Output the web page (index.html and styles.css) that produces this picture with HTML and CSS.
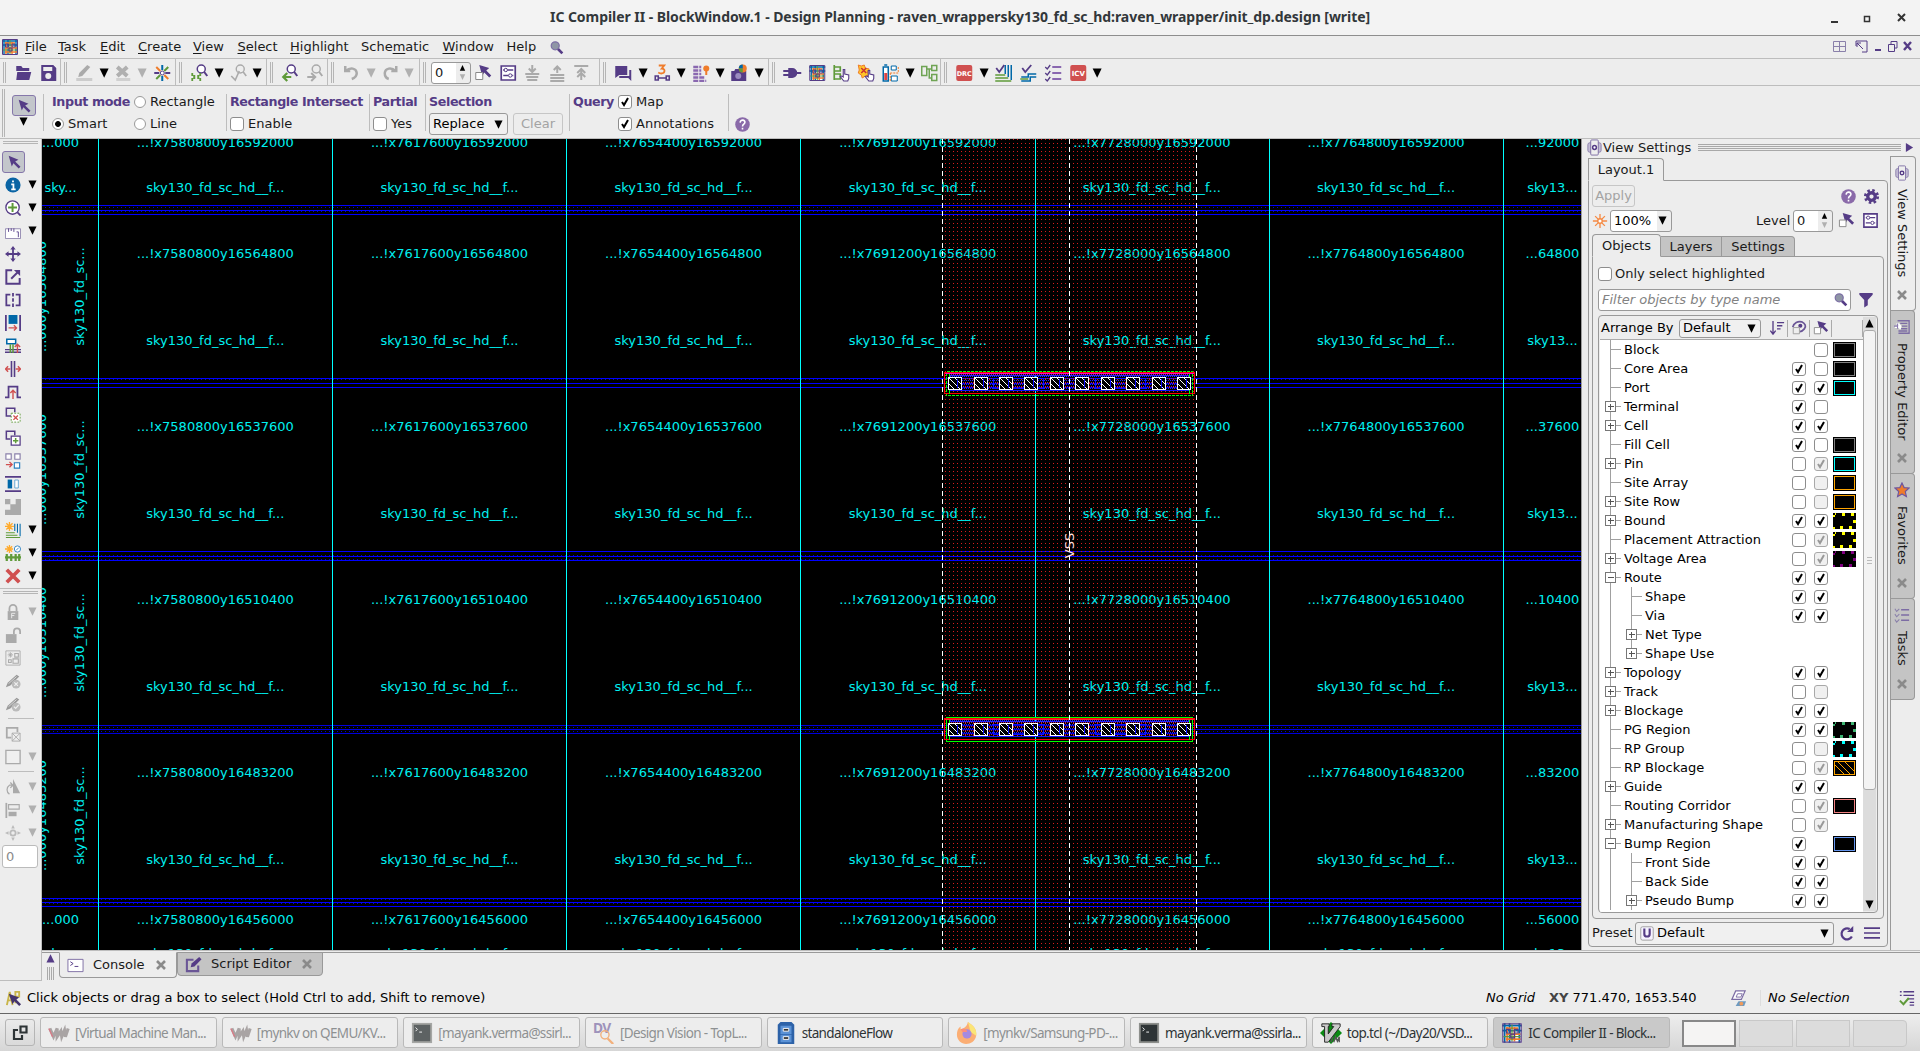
FILE: index.html
```html
<!DOCTYPE html>
<html lang="en">
<head>
<meta charset="utf-8">
<title>IC Compiler II - BlockWindow.1</title>
<link rel="stylesheet" href="styles.css">
</head>
<body>
<svg class="sprite" width="0" height="0">
  <symbol id="tri" viewBox="0 0 10 10"><path d="M.5 .5h9L5 9.800z" fill="currentColor"/></symbol>
  <symbol id="up" viewBox="0 0 10 10"><path d="M.5 9.500h9L5 .2z" fill="currentColor"/></symbol>
  <symbol id="chip" viewBox="0 0 18 18"><path fill="#fff" d="M1 1h16v16H1z"/><path d="M1 3h16M1 7h16M3 1v16M7 1v16M15 1v16" stroke="#0068a8" stroke-width="1.400"/><path d="M4 5h10M4 10h12M5 4v12M11 4v12M4 14h12" stroke="#ef7c2b" stroke-width="1.400"/><path d="M9 2v14M2 12h14" stroke="#5f9a3a"/><path d="M1.500 1.500h15v15h-15zM4.500 6h3v3h-3zM11 6h3v3h-3zM8 10h3v3H8z" fill="none" stroke="#553c86"/></symbol>
  <symbol id="search" viewBox="0 0 18 18"><path d="M9 9l6 6" stroke="#553c86" stroke-width="3"/><circle cx="7" cy="6.500" r="4.500" fill="#8f96a5" stroke="#7d70a5" stroke-width="1.400"/></symbol>
  <symbol id="folder" viewBox="0 0 18 18"><path d="M2 2h5l1.500 2H15v3H2zM3 8h14l-2 8H2z" fill="#553c86"/></symbol>
  <symbol id="save" viewBox="0 0 18 18"><path fill-rule="evenodd" d="M2 1h12l3 3v13H2zM4 3v4h9V3zM9 9a3 3 0 100 6 3 3 0 000-6z" fill="#553c86"/></symbol>
  <symbol id="pencil" viewBox="0 0 18 18"><path d="M4 9L12 1l3 2-8 9-4 1z" fill="#aaa"/><path d="M1 14h16v3H1z" fill="#ccc"/></symbol>
  <symbol id="delgray" viewBox="0 0 18 18"><path d="M3 3l10 9M13 3L3 12" stroke="#b0b0b0" stroke-width="4"/><path d="M2 14h14v3H2z" fill="#d0d0d0"/></symbol>
  <symbol id="burst" viewBox="0 0 18 18"><g stroke-width="2"><path d="M9 1v5M9 12v5" stroke="#0068a8"/><path d="M1 9h5M12 9h5" stroke="#553c86"/><path d="M3 3l4 4M11 11l4 4" stroke="#ef7c2b"/><path d="M15 3l-4 4M7 11l-4 4" stroke="#5f9a3a"/></g><circle cx="9" cy="9" r="2" fill="#fff" stroke="#553c86"/></symbol>
  <symbol id="zoomfit" viewBox="0 0 18 18"><circle cx="11" cy="5" r="4" fill="#fff" stroke="#553c86" stroke-width="1.500"/><path d="M14 8l3 4" stroke="#553c86" stroke-width="2"/><path d="M2 9v3h3M10 9v3H7M2 17v-3h3M10 17v-3H7" fill="none" stroke="#5f9a3a" stroke-width="1.800" stroke-dasharray="3 1"/></symbol>
  <symbol id="zoomgray" viewBox="0 0 18 18"><circle cx="11" cy="5" r="4" fill="none" stroke="#aaa" stroke-width="1.400"/><path d="M14 8l3 4M2 12l4 4 4-9" stroke="#aaa" stroke-width="1.600" fill="none"/></symbol>
  <symbol id="zoomback" viewBox="0 0 18 18"><circle cx="10" cy="5" r="4" fill="#fff" stroke="#553c86" stroke-width="1.500"/><path d="M13 8l3 4" stroke="#553c86" stroke-width="2"/><path d="M10 13H3M6 9l-4 4 4 4" fill="none" stroke="#5f9a3a" stroke-width="2.200"/></symbol>
  <symbol id="zoomnext" viewBox="0 0 18 18"><circle cx="10" cy="5" r="4" fill="none" stroke="#aaa" stroke-width="1.500"/><path d="M13 8l3 4M1 13h7M5 9l4 4-4 4" fill="none" stroke="#aaa" stroke-width="2"/></symbol>
  <symbol id="undo" viewBox="0 0 18 18"><path d="M3 2v5h5M3.500 7C8 3 14 4 14.500 9c0 3-2 5-5 6" fill="none" stroke="#aaa" stroke-width="2.500"/></symbol>
  <symbol id="redo" viewBox="0 0 18 18"><path d="M15 2v5h-5M14.500 7C10 3 4 4 3.500 9c0 3 1 5 4 6" fill="none" stroke="#aaa" stroke-width="2.500"/></symbol>
  <symbol id="pick" viewBox="0 0 18 18"><path d="M5 1l10 3-3 2.500 5 5-2 2-5-5L8 12z" fill="#553c86"/><path d="M1.500 8.500h7v7h-7z" fill="#fff" stroke="#888"/></symbol>
  <symbol id="prefs" viewBox="0 0 18 18"><path d="M2 2h14v14H2z" fill="#fff" stroke="#553c86" stroke-width="1.700"/><circle cx="6.500" cy="6" r="1.700" fill="none" stroke="#553c86"/><circle cx="11" cy="11.500" r="1.700" fill="none" stroke="#553c86"/><path d="M8.500 6H14M4 11.500h5M4 6h1M13 11.500h1" stroke="#553c86" stroke-width="1.300"/></symbol>
  <symbol id="down-l" viewBox="0 0 18 18"><path d="M9 1v6M5.500 4.500L9 8l3.500-3.500M2 10h14M3 13h12M4 16h10" stroke="#aaa" stroke-width="2" fill="none"/></symbol>
  <symbol id="up-l" viewBox="0 0 18 18"><path d="M9 9V3M5.500 6L9 2.500 12.500 6M2 11h14M2 14h14M2 17h14" stroke="#aaa" stroke-width="2" fill="none"/></symbol>
  <symbol id="top-l" viewBox="0 0 18 18"><path d="M2 2h14M9 16V5M5 9l4-4 4 4M5 13l4-4 4 4" stroke="#aaa" stroke-width="2" fill="none"/></symbol>
  <symbol id="chat" viewBox="0 0 18 18"><path d="M1 2h12v9H5l-4 3z" fill="#553c86"/><path d="M15 6h2v11l-3-3H5v-2h10z" fill="#553c86"/></symbol>
  <symbol id="three" viewBox="0 0 18 18"><path d="M5.500 1.500H11L8.500 4.500c4 0 3.500 5-.5 5-1 0-2-.4-3-1" fill="none" stroke="#ef7c2b" stroke-width="1.800"/><path d="M2 12h3v4H2zM13 12h3v4h-3zM5 14h8" fill="none" stroke="#553c86" stroke-width="1.600"/></symbol>
  <symbol id="bricks" viewBox="0 0 18 18"><path d="M1 3h8M1 6.500h8M1 10h8M1 13.500h12M1 17h13" stroke="#8a68b0" stroke-width="2.600" stroke-dasharray="5 1"/><circle cx="14" cy="4.500" r="3" fill="#ef7c2b"/><path d="M14 6v5" stroke="#ef7c2b" stroke-width="2"/></symbol>
  <symbol id="camera" viewBox="0 0 18 18"><path d="M1 7h3l1-2h6l1 2h4v10H1z" fill="#553c86"/><circle cx="8" cy="12" r="3" fill="#9c8cc0"/><circle cx="12.500" cy="4.500" r="4" fill="#ef7c2b"/><path d="M12.500 4.500v-4a4 4 0 00-4 4z" fill="#0068a8"/><path d="M12.500 4.500h-4a4 4 0 004 4z" fill="#5f9a3a"/></symbol>
  <symbol id="plug" viewBox="0 0 18 18"><path d="M5 4h4a5 5 0 010 10H5zM0 6h5v2H0zM0 10h5v2H0zM12 8h6v2h-6z" fill="#553c86"/></symbol>
  <symbol id="tree-h" viewBox="0 0 18 18"><path d="M2 1v15M2 3h6v4H2M2 10h6v5H2" stroke="#5f9a3a" stroke-width="1.700" fill="none"/><path d="M11.500 17L8 12.500l1.500-.5 1.500 1V5.500h1.500V10l4 1v3.500L15.500 17z" fill="#fff" stroke="#553c86" stroke-width="1.100"/></symbol>
  <symbol id="burst-h" viewBox="0 0 18 18"><path d="M1 1l3 1 3-1 1 3 4 1-2 3 2 3-4 1-3 2-1-3-3-2 1-3z" fill="#ffc629" stroke="#ef7c2b"/><path d="M4 4l5 5M9 4L4 9" stroke="#c33" stroke-width="1.500"/><path d="M11.500 17L8 12.500l1.500-.5 1.500 1V6.500h1.500V10l4 1v3.500L15.500 17z" fill="#fff" stroke="#553c86" stroke-width="1.100"/></symbol>
  <symbol id="battery" viewBox="0 0 18 18"><path d="M2 3h5v14H2zM3 1h3" fill="#fff" stroke="#0068a8" stroke-width="1.500"/><path d="M3 9h3v7H3z" fill="#d44"/><path d="M10 2h5v4h-5zM10 12h6v5h-6z" fill="#fff" stroke="#0068a8"/><path d="M9 9h8V2M9 9v8" stroke="#ef7c2b" fill="none" stroke-dasharray="2 1"/></symbol>
  <symbol id="hier" viewBox="0 0 18 18"><path d="M1.500 2.500h5v9h-5zM11.500 1.500h5v5h-5zM11.500 10.500h5v6h-5zM6 5h5M9 5v9h2" fill="none" stroke="#6fa454" stroke-width="1.500"/></symbol>
  <symbol id="drc" viewBox="0 0 18 18"><rect x="1" y="1" width="16" height="16" rx="2" fill="#d05050"/><text x="9" y="12" text-anchor="middle" font-size="6.500" font-weight="bold" fill="#fff">DRC</text></symbol>
  <symbol id="icv" viewBox="0 0 18 18"><rect x="1" y="1" width="16" height="16" rx="2" fill="#d05050"/><text x="9" y="12" text-anchor="middle" font-size="7" font-weight="bold" fill="#fff">ICV</text></symbol>
  <symbol id="chk-a" viewBox="0 0 18 18"><path d="M11 1v9M14 1v12M17 1v15" stroke="#0068a8" stroke-width="1.500"/><path d="M1 11h10M1 14h13M1 17h16" stroke="#5f9a3a" stroke-width="1.500"/><path d="M2 4l3 4 5-7" stroke="#553c86" stroke-width="1.800" fill="none"/></symbol>
  <symbol id="chk-b" viewBox="0 0 18 18"><path d="M17 10H9v3H2M17 13h-6v4H2" stroke="#0068a8" stroke-width="1.500" fill="none"/><path d="M1 15h8" stroke="#5f9a3a" stroke-width="1.300"/><path d="M3 4l3 4 6-7" stroke="#553c86" stroke-width="1.800" fill="none"/></symbol>
  <symbol id="chk-c" viewBox="0 0 18 18"><path d="M8 3h9M8 9h9M8 15h9" stroke="#8a68b0" stroke-width="1.800"/><path d="M1 3l2 2 3-4M1 9l2 2 3-4M1 15l2 2 3-4" stroke="#553c86" fill="none" stroke-width="1.300"/></symbol>
  <symbol id="arrow" viewBox="0 0 18 18"><path d="M3 2l11 4.500-3.700 1.800 6 6-2 2-6-6L6.500 14z" fill="#553c86"/></symbol>
  <symbol id="help" viewBox="0 0 18 18"><circle cx="9" cy="9" r="7.700" fill="#8a6aa9"/><path d="M6.500 7c.3-4 5.600-3 5 0-.4 1.700-2.500 1.600-2.500 4M9 12.500v1.800" fill="none" stroke="#fff" stroke-width="1.700"/></symbol>
  <symbol id="gear" viewBox="0 0 18 18"><circle cx="9" cy="9" r="4" fill="none" stroke="#553c86" stroke-width="3.500"/><circle cx="9" cy="9" r="6.500" fill="none" stroke="#553c86" stroke-width="3" stroke-dasharray="2.600 2.500"/></symbol>
  <symbol id="info" viewBox="0 0 18 18"><circle cx="9" cy="9" r="8.500" fill="#0a64a4"/><path d="M9 4v2M7 8.200h2.500V14M7 14h5" stroke="#fff" stroke-width="2" fill="none"/></symbol>
  <symbol id="zoomin" viewBox="0 0 18 18"><circle cx="8.500" cy="8.500" r="7.500" fill="#fff" stroke="#553c86" stroke-width="1.500"/><path d="M14 14l3.500 3.500" stroke="#553c86" stroke-width="2"/><path d="M8.500 3.500v10M3.500 8.500h10" stroke="#5f9a3a" stroke-width="2.200"/></symbol>
  <symbol id="ruler" viewBox="0 0 18 18"><path d="M.500 6.500h17v11H.500z" fill="#fff" stroke="#8a80aa"/><path d="M4 6v4M7 6v3M10 6v4M13 10h2v6" stroke="#553c86" fill="none"/></symbol>
  <symbol id="move" viewBox="0 0 18 18"><path d="M9 2v14M2 9h14" stroke="#553c86" stroke-width="2"/><path d="M9 0l3 4H6zM9 18l3-4H6zM0 9l4-3v6zM18 9l-4-3v6z" fill="#553c86"/></symbol>
  <symbol id="resize" viewBox="0 0 18 18"><path d="M8 1.500H1.500v15h15V10" fill="none" stroke="#553c86" stroke-width="2.200"/><path d="M7 11l7-7" stroke="#553c86" stroke-width="2.200"/><path d="M10 1h7v7z" fill="#553c86"/></symbol>
  <symbol id="flip" viewBox="0 0 18 18"><path d="M6 3H1.500v12H6M12 3h4.500v12H12" fill="none" stroke="#553c86" stroke-width="2"/><path d="M9 1v16" stroke="#553c86" stroke-width="2" stroke-dasharray="4 2"/></symbol>
  <symbol id="side" viewBox="0 0 18 18"><path d="M1 0v18M17 0v18" stroke="#553c86" stroke-width="2"/><path d="M4 0h10v10H4z" fill="#0068a8"/><path d="M4 14.500h9M10 11.500l3 3-3 3" stroke="#d05050" stroke-width="1.500" fill="none"/></symbol>
  <symbol id="stack" viewBox="0 0 18 18"><path d="M2 1.500h10v5H2z" fill="#fff" stroke="#0068a8" stroke-width="1.700"/><path d="M0 13h18M0 16h18" stroke="#553c86" stroke-width="1.500"/><path d="M6 7v10M9 7v10" stroke="#5f9a3a" stroke-width="1.700"/><path d="M14 17V8M11 10l3-3 3 3" stroke="#d05050" stroke-width="1.600" fill="none"/></symbol>
  <symbol id="spread" viewBox="0 0 18 18"><path d="M7.300 0v18M10.700 0v18" stroke="#553c86" stroke-width="1.800"/><path d="M6 9H1M3.500 6l-3 3 3 3M12 9h5M14.500 6l3 3-3 3" stroke="#d05050" stroke-width="1.700" fill="none"/></symbol>
  <symbol id="pulse" viewBox="0 0 18 18"><path d="M0 15h4V3h10v12h4" stroke="#553c86" stroke-width="2" fill="none"/><path d="M9 17V8M6 10l3-3 3 3" stroke="#d05050" stroke-width="1.600" fill="none"/></symbol>
  <symbol id="copy-x" viewBox="0 0 18 18"><path d="M7 10H1.500V1.500H11V6" stroke="#553c86" stroke-width="1.700" fill="none"/><path d="M7 7h10v10H7z" fill="#fff" stroke="#5f9a3a" stroke-dasharray="2 1.500"/><path d="M9.500 9.500l5 5M14.500 9.500l-5 5" stroke="#d05050" stroke-width="1.500"/></symbol>
  <symbol id="copy-p" viewBox="0 0 18 18"><path d="M6 10H1.500V1.500H11V6" stroke="#553c86" stroke-width="1.700" fill="none"/><path d="M7 7h10v10H7z" fill="#fff" stroke="#553c86" stroke-width="1.400"/><path d="M12 9v6M9 12h6" stroke="#5f9a3a" stroke-width="1.700"/></symbol>
  <symbol id="quad" viewBox="0 0 18 18"><path d="M1 1h6v6H1zM11 1h6v6h-6z" fill="#fff" stroke="#8a80aa" stroke-width="1.300"/><path d="M10.500 11h6v6h-6z" fill="#fff" stroke="#2a80c0" stroke-width="1.300"/><path d="M1 13h7M5 10l3 3-3 3" stroke="#d05050" stroke-width="1.500" fill="none"/></symbol>
  <symbol id="fitv" viewBox="0 0 18 18"><path d="M0 1h18M0 17h18" stroke="#553c86" stroke-width="2"/><path d="M3 4h5v10H3z" fill="#0068a8"/><path d="M11 4.500h4v9h-4z" fill="#fff" stroke="#5aa0d0"/></symbol>
  <symbol id="checker" viewBox="0 0 18 18"><path d="M0 0h6v6H0zM12 0h6v6h-6zM6 6h6v6H6zM0 12h18v6H0zM12 5h6v8h-6z" fill="#aaa"/></symbol>
  <symbol id="newlayer" viewBox="0 0 18 18"><path d="M11 2v8M14 2v10M17 2v14" stroke="#0068a8" stroke-width="1.200"/><path d="M1 12h10M1 15h13M1 17.500h16" stroke="#5f9a3a" stroke-width="1.200"/><path d="M5 0v10M0 5h10M1.500 1.500l7 7M8.500 1.500l-7 7" stroke="#ffab2e" stroke-width="1.500"/></symbol>
  <symbol id="newfence" viewBox="0 0 18 18"><path d="M0 14h18M2 10v8M7 10v8M12 10v8M16 10v8" stroke="#5f9a3a" stroke-width="2.500"/><path d="M5 0v9M0 4.500h9M2 1.500l6 6M8 1.500l-6 6" stroke="#ffab2e" stroke-width="1.500"/><circle cx="14" cy="4.500" r="3.500" fill="#fff" stroke="#2a80c0"/><path d="M12.500 6l3-3" stroke="#2a80c0"/></symbol>
  <symbol id="redx" viewBox="0 0 18 18"><path d="M2 2l14 14M16 2L2 16" stroke="#d05050" stroke-width="4.200"/></symbol>
  <symbol id="lock" viewBox="0 0 18 18"><path d="M5 8V5a4 4 0 018 0v3" fill="none" stroke="#aaa" stroke-width="2"/><path d="M3 8h12v10H3z" fill="#aaa"/><path d="M7.500 16v-5.500h4M7.500 13h3" stroke="#eee" fill="none"/></symbol>
  <symbol id="unlock" viewBox="0 0 18 18"><path d="M10 8V5a3.500 3.500 0 017 0v3" fill="none" stroke="#aaa" stroke-width="2"/><path d="M1 8h12v10H1z" fill="#aaa"/></symbol>
  <symbol id="blocks" viewBox="0 0 18 18"><path d="M1 1h16v16H1z" fill="none" stroke="#aaa"/><path d="M3 5.500h6M6 2.500v6M4 3.500l4 4M8 3.500l-4 4" stroke="#aaa"/><path d="M11 4h4v4h-4zM4 11h3v3H4zM9 10h6v5H9z" fill="none" stroke="#aaa" stroke-width="1.200"/></symbol>
  <symbol id="pen-x" viewBox="0 0 18 18"><path d="M1 16l2-5L13 2l3 2L6 14z" fill="#999"/><path d="M4 12l9-8" stroke="#ddd"/><circle cx="12.500" cy="12.500" r="5" fill="#bbb"/><path d="M10.500 10.500l4 4M14.500 10.500l-4 4" stroke="#eee" stroke-width="1.400"/></symbol>
  <symbol id="pen-c" viewBox="0 0 18 18"><path d="M1 16l2-5L13 2l3 2L6 14z" fill="#999"/><path d="M4 12l9-8" stroke="#ddd"/><circle cx="12.500" cy="12.500" r="5" fill="#bbb"/><path d="M10 12l2 2 3.500-4" stroke="#eee" stroke-width="1.400" fill="none"/></symbol>
  <symbol id="sq-x" viewBox="0 0 18 18"><path d="M7 13H2V2h12v5" fill="none" stroke="#aaa" stroke-width="2"/><path d="M8 8h9v9H8zM8 8l9 9M17 8l-9 9" fill="none" stroke="#aaa"/></symbol>
  <symbol id="sq" viewBox="0 0 18 18"><path d="M1 1.500h16v15H1z" fill="#efefef" stroke="#aaa" stroke-width="1.500"/></symbol>
  <symbol id="mirror" viewBox="0 0 18 18"><path d="M9 0l8 16H9z" fill="#aaa"/><path d="M5 17a6 6 0 010-10h3M6 4l3 3-3 3" stroke="#aaa" fill="none" stroke-width="1.400"/></symbol>
  <symbol id="align" viewBox="0 0 18 18"><path d="M1.500 1v17" stroke="#aaa" stroke-width="2"/><path d="M4 3h12v5H4z" fill="none" stroke="#aaa" stroke-width="1.300"/><path d="M4 11h9v5H4z" fill="#aaa"/></symbol>
  <symbol id="center" viewBox="0 0 18 18"><circle cx="9" cy="9" r="3" fill="none" stroke="#bbb" stroke-width="2"/><path d="M9 0l2 4H7zM9 18l2-4H7zM0 9l4-2v4zM18 9l-4-2v4z" fill="#bbb"/></symbol>
  <symbol id="chipview" viewBox="0 0 18 18"><rect x="2" y="4" width="14" height="10" rx="2" fill="#c4bdd6" stroke="#8a80aa"/><rect x="5" y="1" width="8" height="16" rx="1" fill="#eee" stroke="#7c6ca4"/><circle cx="9" cy="9" r="2" fill="#fff" stroke="#553c86" stroke-width="1.600"/></symbol>
  <symbol id="sun" viewBox="0 0 18 18"><path d="M9 1v16M1 9h16M3.500 3.500l11 11M14.500 3.500l-11 11" stroke="#f58b45" stroke-width="1.500"/><circle cx="9" cy="9" r="2.500" fill="#fff" stroke="#f58b45" stroke-width="1.500"/></symbol>
  <symbol id="funnel" viewBox="0 0 18 18"><path d="M1.500 1h15v2L11 9v6l-4 2.500V9L1.500 3z" fill="#553c86"/></symbol>
  <symbol id="sort" viewBox="0 0 18 18"><path d="M4.500 1v14M1.500 12l3 4 3-4M9 3h8M9 6.500h6M9 10h4" stroke="#553c86" stroke-width="1.500" fill="none"/></symbol>
  <symbol id="eye" viewBox="0 0 18 18"><path d="M2 8C3 3 8 1 12 2c4 2 5.500 5 3 8s-4 3-5 3" fill="none" stroke="#6a5696" stroke-width="2"/><circle cx="10.500" cy="6.500" r="2.300" fill="#553c86"/><path d="M2.500 8.500h7v7h-7z" fill="#eee" stroke="#999"/></symbol>
  <symbol id="preset" viewBox="0 0 18 18"><rect x="2" y="2" width="14" height="15" rx="2" fill="#f6f3ff" stroke="#999"/><path d="M6 4v6c0 4 6 4 6 0V4" fill="none" stroke="#553c86" stroke-width="2.400"/></symbol>
  <symbol id="reload" viewBox="0 0 18 18"><path d="M14.500 13A6.200 6.200 0 1112 4.500" fill="none" stroke="#553c86" stroke-width="2.500"/><path d="M9 8h7V1z" fill="#553c86"/></symbol>
  <symbol id="menu" viewBox="0 0 18 18"><path d="M0 3.500h18M0 9h18M0 14.500h18" stroke="#553c86" stroke-width="1.900"/></symbol>
  <symbol id="close" viewBox="0 0 10 10"><path d="M1 1l8 8M9 1L1 9" stroke="#8a8a8a" stroke-width="2.600"/></symbol>
  <symbol id="props" viewBox="0 0 18 18"><path d="M4 2h13v14H5M7 5h8M9 8h6M8 11h7M5 13.500h10" fill="none" stroke="#7c6ca4" stroke-width="1.500"/><path d="M1 9h5M3 6a3 3 0 013 5" stroke="#fff" stroke-width="2.500" fill="none"/><path d="M0 8h4M4 5v6" stroke="#8a7ab0" stroke-width="1.200" fill="none"/></symbol>
  <symbol id="star" viewBox="0 0 18 18"><path d="M9 1l2.400 5.300 5.600.5-4.300 3.900 1.300 5.800L9 13.500l-5 3 1.300-5.800L1 6.800l5.600-.5z" fill="#ef7c2b" stroke="#6d56a0" stroke-width="1.300"/></symbol>
  <symbol id="tasks" viewBox="0 0 18 18"><path d="M8 3h9M8 9h9M8 15h9" stroke="#7c6ca4" stroke-width="1.700"/><path d="M1 2l2 3 3-3M1 8l2 3 3-3M1 14l2 3 3-3" stroke="#8a80aa" fill="none" stroke-width="1.200"/></symbol>
  <symbol id="console" viewBox="0 0 18 18"><path d="M1 2.500h16v13H1z" fill="#fff" stroke="#7c6ca4"/><path d="M3.500 5l3 2-3 2M8 10h4" stroke="#553c86" fill="none"/></symbol>
  <symbol id="edit" viewBox="0 0 18 18"><path d="M9 4H2v12h12v-6" fill="none" stroke="#6a5696" stroke-width="2.200"/><path d="M6 12l1-4 8-7 2.500 2.500L10 11z" fill="#553c86"/></symbol>
  <symbol id="hint" viewBox="0 0 18 18"><path d="M2 16L5 2l3 14M3 11h4M11 1v13M11 2h4v5h-4" fill="none" stroke="#c9b54a" stroke-width="2"/><path d="M4 4l11 4-3 2 5 5-2 2-5-5-2 3z" fill="#44346c"/></symbol>
  <symbol id="grid3d" viewBox="0 0 18 18"><path d="M6 1h10l-4 9H2z" fill="#fff" stroke="#7c6ca4" stroke-width="1.300"/><path d="M8 4h5l-1.500 3.500H6.500z" fill="none" stroke="#7c6ca4"/><path d="M9 12h8l-2 5H6z" fill="#6d9ac0"/><circle cx="12" cy="14.500" r="2" fill="#ef9a5b"/></symbol>
  <symbol id="checklist" viewBox="0 0 18 18"><path d="M1 2h2M5 2h12M1 6h2M5 6h12M10 10h7M12 14h5M12 17h5" stroke="#553c86" stroke-width="1.500"/><path d="M1 12l4 4 6-7" stroke="#5f9a3a" stroke-width="2.200" fill="none"/></symbol>
  <symbol id="vmm" viewBox="0 0 24 24"><path d="M2 7l4 9 4-9v9l4-6 1 6 3-7 1 7 3-9" fill="none" stroke="#a9a4a4" stroke-width="3.400"/><path d="M1 7l4 9" stroke="#d97a86" stroke-width="1.500"/></symbol>
  <symbol id="term" viewBox="0 0 24 24"><path d="M1 1h22v22H1z" fill="#8d8f8c"/><path d="M3 3h18v18H3z" fill="#2e3436"/><path d="M5 6l2 2-2 2M9 11h3" stroke="#fff" fill="none"/></symbol>
  <symbol id="dv" viewBox="0 0 24 24"><text x="0" y="12" font-size="15" font-weight="bold" fill="#9d92bb">DV</text><circle cx="13" cy="14" r="4.500" fill="none" stroke="#f2b07c" stroke-width="1.500"/><path d="M16 18l6 6" stroke="#f2b07c" stroke-width="2.500"/></symbol>
  <symbol id="cabinet" viewBox="0 0 24 24"><path d="M3 3l3-3h12l3 3v21H3z" fill="#2d62a8"/><path d="M6 4h12v9H6zM6 14h12v8H6z" fill="#5b92d6"/><path d="M9 7h6v3H9zM9 16h6v3H9z" fill="#333" stroke="#fff"/></symbol>
  <symbol id="fox" viewBox="0 0 24 24"><path d="M13 0c6 4 10 8 9 15-1 6-6 9-11 9S1 20 1 14c0-4 1-7 4-9v3c4-1 7-3 8-8z" fill="#fbae74"/><path d="M13 0c6 4 10 8 9 15l-6-4z" fill="#fbe577"/><circle cx="12" cy="13" r="5" fill="#a58ae0"/><path d="M5 8c3-2 7-1 7 3H7z" fill="#fb8f7d"/></symbol>
  <symbol id="vim" viewBox="0 0 24 24"><path d="M12 0l12 12-12 12L0 12z" fill="#0a8a12"/><path d="M2 2h8v3H9v8l6-8h-2V2h9v3L9 22H5V5H2z" fill="#c9c9c9" stroke="#222"/><path d="M12 22l2-6M15 22l2-6 2 5 2-5v6" stroke="#555" fill="none" stroke-width="1.500"/></symbol>
</svg>

<header class="titlebar">
  <h1>IC Compiler II - BlockWindow.1 - Design Planning - raven_wrappersky130_fd_sc_hd:raven_wrapper/init_dp.design [write]</h1>
  <svg class="winctl" viewBox="0 0 90 20"><path d="M6 14h7" stroke="#333" stroke-width="2"/><path d="M39.500 8.500h5v5h-5z" fill="none" stroke="#333" stroke-width="1.500"/><path d="M73 6l7 7M80 6l-7 7" stroke="#333" stroke-width="2"/></svg>
</header>

<nav class="menubar">
  <svg class="i20"><use href="#chip"/></svg>
  <ul>
    <li><u>F</u>ile</li><li><u>T</u>ask</li><li><u>E</u>dit</li><li><u>C</u>reate</li><li><u>V</u>iew</li><li><u>S</u>elect</li><li><u>H</u>ighlight</li><li>Sche<u>m</u>atic</li><li><u>W</u>indow</li><li>Help</li>
  </ul>
  <svg class="i16"><use href="#search"/></svg>
  <svg class="mdi" viewBox="0 0 84 18"><g fill="none" stroke="#553c86"><path d="M3.500 3.500h12v10h-12zM9.500 3v10M4 8.500h12" stroke="#8a80aa"/><path d="M32 14h5V3H26v5M33 11l-6-6M27 9V5h4"/><path d="M45 12h6" stroke-width="2"/><path d="M58.500 6.500h6v7h-6zM61 6V3.500h6V10h-3"/><path d="M74 4l7 8M81 4l-7 8" stroke-width="2.400"/></g></svg>
</nav>

<div class="toolbar" id="toolbar"></div>

<div class="modebar">
  <i class="grip"></i>
  <div class="modebtn"><span class="pressed"><svg class="i16"><use href="#arrow"/></svg></span><svg class="t"><use href="#tri"/></svg></div>
  <section class="s-mode"><div><b>Input mode</b><i class="radio"></i>Rectangle</div><div><i class="radio on"></i><span class="smart">Smart</span><i class="radio"></i>Line</div></section>
  <section class="s-rect"><div><b>Rectangle Intersect</b></div><div><i class="cb"></i>Enable</div></section>
  <section class="s-part"><div><b>Partial</b></div><div><i class="cb"></i>Yes</div></section>
  <section class="s-sel"><div><b>Selection</b></div><div><span class="combo">Replace<svg class="t"><use href="#tri"/></svg></span><span class="btn">Clear</span></div></section>
  <section class="s-query"><div><b>Query</b><i class="cb on"></i>Map</div><div><b></b><i class="cb on"></i>Annotations</div></section>
  <section class="s-help"><div></div><div><svg class="i18"><use href="#help"/></svg></div></section>
</div>

<main>
  <aside class="tools" id="tools"></aside>
  <div class="work">
    <div class="upper">
      <svg class="layout" id="layout" viewBox="42 139 1539 811"></svg>
      <div class="dock">
        <div class="dockhead"><svg class="i18"><use href="#chipview"/></svg><span>View Settings</span><i class="lines"></i><svg class="play" viewBox="0 0 10 10"><path d="M1 0l8 5-8 5z" fill="#553c86"/></svg></div>
        <div class="dockbody">
          <div class="settings">
            <div class="tabs outer"><span class="tab on">Layout.1</span></div>
            <div class="pane">
              <div class="line1"><span class="btn">Apply</span><svg class="i18"><use href="#help"/></svg><svg class="i18"><use href="#gear"/></svg></div>
              <div class="line2"><svg class="i16"><use href="#sun"/></svg><span class="combo">100%<svg class="t"><use href="#tri"/></svg></span><label>Level</label><span class="spin">0<em><svg><use href="#up"/></svg><svg class="dim"><use href="#tri"/></svg></em></span><svg class="i18"><use href="#pick"/></svg><svg class="i18"><use href="#prefs"/></svg></div>
              <div class="tabs inner"><span class="tab on">Objects</span><span class="tab">Layers</span><span class="tab">Settings</span></div>
              <div class="pane2">
                <div class="only"><i class="cb"></i>Only select highlighted</div>
                <div class="filter"><span class="field">Filter objects by type name<svg class="i16"><use href="#search"/></svg></span><svg class="i16"><use href="#funnel"/></svg></div>
                <div class="treebox">
                  <div class="treecol">
                    <div class="treehead"><span class="arr">Arrange By</span><span class="combo">Default<svg class="t"><use href="#tri"/></svg></span><span class="hc"><svg class="i16"><use href="#sort"/></svg></span><span class="hc"><svg class="i16"><use href="#eye"/></svg></span><span class="hc"><svg class="i16"><use href="#pick"/></svg></span><span class="hc"></span></div>
                    <div class="tree" id="tree"></div>
                  </div>
                  <div class="scroll"><svg class="t"><use href="#up"/></svg><div class="thumb"><i></i></div><div class="trough"></div><svg class="t"><use href="#tri"/></svg></div>
                </div>
              </div>
              <div class="preset"><span>Preset</span><span class="combo"><svg class="i16"><use href="#preset"/></svg>Default<svg class="t"><use href="#tri"/></svg></span><svg class="i16"><use href="#reload"/></svg><svg class="i16"><use href="#menu"/></svg></div>
            </div>
          </div>
          <div class="vtabs">
            <div class="vtab v1 on"><svg class="i16"><use href="#chipview"/></svg><span>View Settings</span><svg class="x"><use href="#close"/></svg></div>
            <div class="vtab v2"><svg class="i16"><use href="#props"/></svg><span>Property Editor</span><svg class="x"><use href="#close"/></svg></div>
            <div class="vtab v3"><svg class="i16"><use href="#star"/></svg><span>Favorites</span><svg class="x"><use href="#close"/></svg></div>
            <div class="vtab v4"><svg class="i16"><use href="#tasks"/></svg><span>Tasks</span><svg class="x"><use href="#close"/></svg></div>
          </div>
        </div>
      </div>
    </div>
    <div class="lower">
      <div class="expander"><svg class="t"><use href="#up"/></svg><i></i></div>
      <div class="btab on"><svg class="i18"><use href="#console"/></svg><span>Console</span><svg class="x"><use href="#close"/></svg></div>
      <div class="btab"><svg class="i18"><use href="#edit"/></svg><span>Script Editor</span><svg class="x"><use href="#close"/></svg></div>
    </div>
  </div>
</main>

<footer class="status">
  <svg class="i18"><use href="#hint"/></svg><span>Click objects or drag a box to select (Hold Ctrl to add, Shift to remove)</span>
  <span class="grid"><em>No Grid</em></span><span class="xy"><b>XY</b> 771.470, 1653.540</span>
  <svg class="i18"><use href="#grid3d"/></svg><span class="nosel"><em>No Selection</em></span><svg class="i16"><use href="#checklist"/></svg>
</footer>

<div class="taskbar">
  <span class="show"><svg viewBox="0 0 18 18"><path d="M9.500 2.500h6v6h-6zM7 6H3v9h8v-4" fill="none" stroke="#2e3436" stroke-width="2.200"/></svg></span>
  <div class="tasks">
    <span class="task min"><svg><use href="#vmm"/></svg>[Virtual Machine Man...</span>
    <span class="task min"><svg><use href="#vmm"/></svg>[mynkv on QEMU/KV...</span>
    <span class="task min"><svg class="fade"><use href="#term"/></svg>[mayank.verma@ssirl...</span>
    <span class="task min"><svg><use href="#dv"/></svg>[Design Vision - TopL...</span>
    <span class="task"><svg><use href="#cabinet"/></svg>standaloneFlow</span>
    <span class="task min"><svg><use href="#fox"/></svg>[mynkv/Samsung-PD-...</span>
    <span class="task"><svg><use href="#term"/></svg>mayank.verma@ssirla...</span>
    <span class="task"><svg><use href="#vim"/></svg>top.tcl (~/Day20/VSD...</span>
    <span class="task active"><svg><use href="#chip"/></svg>IC Compiler II - Block...</span>
  </div>
  <div class="pager"><i class="on"></i><i></i><i></i><i></i></div>
</div>
<script src="app.js"></script>
</body>
</html>
```

FILE: styles.css
```css
* { box-sizing: border-box; }
body {
  margin: 0; width: 1920px; height: 1051px; overflow: hidden;
  display: flex; flex-direction: column;
  background: #ededed; color: #1a1a1a;
  font: 13px/16px "DejaVu Sans", sans-serif;
}
.sprite { position: absolute; }
svg { display: block; flex: none; }
.i16 { width: 16px; height: 16px; }
.i18 { width: 17px; height: 17px; }
.i20 { width: 18px; height: 18px; }
.t { width: 9px; height: 9px; color: #000; }
.x { width: 10px; height: 10px; }

.titlebar { height: 36px; background: #f3f3f3; border-bottom: 1px solid #8e8e8e; display: flex; align-items: center; position: relative; justify-content: center; }
.titlebar h1 { margin: 0 0 2px; font: bold 14px/20px "Noto Sans", sans-serif; letter-spacing: -.055px; color: #32373a; white-space: nowrap; width: 820px; }
.winctl { position: absolute; right: 5px; top: 8px; width: 90px; height: 20px; }

.menubar { height: 23px; border-bottom: 1px solid #bdbdbd; display: flex; align-items: center; padding-left: 1px; }
.menubar ul { display: grid; grid-template-columns: 33px 42px 38px 55px 44.500px 52.500px 71px 81.500px 64px 42px; list-style: none; margin: 0 0 0 6px; padding: 0; }
.menubar ul + .i16 { margin-top: 1px; }
.menubar u { text-underline-offset: 2px; }
.mdi { width: 84px; height: 18px; margin-left: 1265px; }

.toolbar { height: 27px; border-bottom: 1px solid #bdbdbd; display: flex; }
.group { display: flex; align-items: center; border-left: 1px solid #bdbdbd; padding-left: 3px; height: 27px; }
.group:first-child { border-left: 0; padding-left: 3px; }
.grip { width: 3px; height: 21px; border: solid #b5b5b5; border-width: 0 1px; margin-right: 5px; flex: none; }
.ico { width: 24.500px; height: 18px; flex: none; }
.caret { width: 14.300px; height: 10px; flex: none; color: #000; }
.dim { color: #b0b0b0; }
.g1 { width: 60px; } .g2 { width: 115px; } .g3 { width: 91px; } .g4 { width: 61px; }
.g5 { width: 92px; } .g6 { width: 180px; } .g7 { width: 169px; } .g8 { width: 172px; }
.g9 .ico + .ico { margin-left: .5px; }

.spin, .combo, .field { border: 1px solid #999; border-radius: 3px; background: #fff; display: flex; align-items: center; }
.spin { width: 40px; height: 22px; padding-left: 3px; background: linear-gradient(90deg, #fff 24px, #ededed 24px); justify-content: space-between; }
.spin em { display: grid; gap: 3px; padding-right: 4px; color: #000; }
.spin em svg { width: 7px; height: 6px; }
.combo { background: #f0f0f0; justify-content: space-between; padding: 0 4px 0 3px; height: 22px; color: #000; }
.btn { border: 1px solid #c6c6c6; border-radius: 3px; color: #a3a3a3; display: flex; align-items: center; justify-content: center; height: 22px; }
.cb { width: 14px; height: 14px; border: 1px solid #8d8d8d; border-radius: 3px; background: #fff; flex: none; display: block; }
.cb.on { background: #fff url("data:image/svg+xml,%3Csvg xmlns='http://www.w3.org/2000/svg' viewBox='0 0 12 12'%3E%3Cpath d='M3 6l2 3 4-7' fill='none' stroke='%23000' stroke-width='2'/%3E%3C/svg%3E"); }
.cb.off { background: #f0f0f0; border-color: #a8a8a8; }
.cb.half { background: #f0f0f0 url("data:image/svg+xml,%3Csvg xmlns='http://www.w3.org/2000/svg' viewBox='0 0 12 12'%3E%3Cpath d='M3 6l2 3 4-7' fill='none' stroke='%23999' stroke-width='2'/%3E%3C/svg%3E"); border-color: #a8a8a8; }
.radio { width: 12px; height: 12px; border: 1px solid #999; border-radius: 50%; background: #fff; flex: none; }
.radio.on { background: radial-gradient(circle, #000 2.500px, #fff 3.300px); }

.modebar { height: 53px; border-bottom: 1px solid #bdbdbd; display: flex; padding-left: 2px; }
.modebar .grip { height: 48px; margin: 3px 7px 0 0; }
.modebtn { width: 31px; display: flex; flex-direction: column; align-items: flex-start; padding-top: 9px; }
.modebtn .t { margin: 1px 0 0 7px; }
.pressed { width: 24px; height: 21px; background: #c3c6cb; border: 1px solid #8577aa; border-radius: 3px; display: grid; place-items: center; }
.modebar section { border-left: 1px solid #bdbdbd; margin-top: 8px; height: 37px; display: grid; grid-template-rows: 15px 22px; row-gap: 4px; padding-left: 3px; }
.modebar section div { display: flex; align-items: center; white-space: nowrap; }
.modebar b { color: #553c86; font-size: 12.700px; letter-spacing: -.4px; }
.modebar .cb { margin-right: 4px; }
.modebar .radio { margin-right: 4px; }
.modebar .s-mode { width: 183px; padding-left: 8px; }
.s-mode b { width: 82px; }
.s-mode .smart { width: 66px; }
.s-rect { width: 143px; } .s-part { width: 56px; } .s-sel { width: 144px; } .s-query { width: 159px; }
.s-query b { width: 45px; }
.s-sel .combo { width: 79px; margin-right: 5px; }
.s-sel .btn { width: 50px; }
.modebar .s-help { padding-left: 5px; }

main { height: 842px; display: flex; }
.tools { width: 42px; height: 842px; border-right: 1px solid #bdbdbd; border-bottom: 1px solid #bdbdbd; padding: 2px 0 0 2px; }
.hgrip { height: 3px; width: 35px; border: solid #b5b5b5; border-width: 1px 0; margin-left: 1px; }
.tool { height: 23px; display: flex; align-items: center; padding-left: 3px; gap: 7px; }
.tool.sel { padding: 0; height: 22px; margin: 7px 0 0; }
.tool.sel span { width: 23px; height: 22px; border: 1px solid #8577aa; border-radius: 3px; background: #c3c6cb; display: grid; place-items: center; }
.tool .main { width: 16px; height: 16px; }
.tools hr { border: 0; margin: 0; border-top: 1px solid #bdbdbd; }
.tools .full { margin: 1px 0 2px -2px; }
.tools .full + .hgrip { margin-bottom: 6px; }
.tools .short { width: 26px; margin: 3px 0 3px 6px; }
.num { width: 36px; height: 23px; border: 1px solid #bbb; border-radius: 3px; background: #fff; color: #8a8a8a; padding: 3px; margin-top: 1px; }

.work { width: 1878px; }
.upper { display: flex; height: 811px; background: #ededed; }
.layout { width: 1539px; height: 811px; background: #000; font-size: 13px; }
.dock { width: 339px; border-left: 1px solid #9c9c9c; display: flex; flex-direction: column; }
.dockhead { display: flex; align-items: center; height: 17px; padding-left: 4px; white-space: nowrap; }
.dockhead span { width: 95px; }
.lines { width: 203px; height: 7px; background: repeating-linear-gradient(#a8a8a8 0 1px, transparent 1px 2px); }
.play { width: 9px; height: 9px; margin-left: 4px; }
.dockbody { display: flex; height: 794px; }
.settings { width: 300px; margin-left: 6px; padding-top: 2px; }
.tabs { display: flex; align-items: flex-end; position: relative; z-index: 1; margin-bottom: -1px; }
.tab { border: 1px solid #999; border-left-width: 0; background: #c4c4c4; display: flex; align-items: center; justify-content: center; height: 21px; }
.tab.on { background: #ededed; border-left-width: 1px; border-bottom-color: #ededed; border-radius: 4px 4px 0 0; height: 23px; }
.tab:last-child { border-radius: 0 4px 0 0; }
.outer .tab { width: 76px; }
.inner .tab:nth-child(1) { width: 69px; } .inner .tab:nth-child(2) { width: 61px; } .inner .tab:nth-child(3) { width: 73px; }
.pane { border: 1px solid #999; border-radius: 0 4px 4px 4px; height: 767px; padding: 3px 3px 0; }
.line1 { display: flex; align-items: center; height: 24px; gap: 6px; }
.line1 .btn { width: 43px; margin-right: 199px; }
.line2 { display: flex; align-items: center; height: 25px; }
.line2 .combo { width: 62px; margin: 0 84px 0 2px; background: linear-gradient(90deg, #fff 46px, #ededed 46px); }
.line2 label { width: 37px; }
.line2 .spin { margin-right: 5px; }
.line2 .spin + svg { margin-right: 7px; }
.inner { margin-top: 1px; }
.pane2 { border: 1px solid #999; border-radius: 0 4px 4px 4px; width: 292px; height: 663px; padding: 9px 5px 0; }
.only { display: flex; align-items: center; gap: 3px; height: 15px; }
.filter { display: flex; align-items: center; margin-top: 8px; gap: 7px; }
.field { width: 253px; height: 22px; font-style: italic; color: #828282; padding: 0 1px 0 3px; justify-content: space-between; }
.treebox { border: 1px solid #999; border-radius: 4px; margin-top: 4px; width: 280px; height: 598px; display: flex; padding: 1px; overflow: hidden; }
.treecol { width: 264px; }
.treehead { display: flex; align-items: center; height: 23px; border-bottom: 1px solid #aaa; }
.arr { width: 79px; padding-left: 1px; color: #000; }
.treehead .combo { width: 82px; height: 19px; margin-right: 5px; }
.hc { width: 22px; height: 17px; border-right: 1px solid #aaa; display: grid; place-items: center; }
.hc:last-child { width: 31px; }
.tree { background: #fff; height: 572px; }
.row { display: grid; grid-template-columns: 192px 22px 19px 24px; height: 19px; align-items: center; }
.row .name { display: flex; align-items: center; height: 19px; white-space: nowrap; color: #000; }
.row .name svg { width: 24px; height: 19px; }
.row.sub .name svg { width: 45px; }
.scroll { width: 13px; background: #dcdcdc; display: flex; flex-direction: column; align-items: center; }
.scroll .t { margin: 2px 0; }
.thumb { width: 13px; height: 460px; border: 1px solid #aaa; border-radius: 3px; background: #f3f3f3; display: grid; place-items: center; }
.thumb i { width: 5px; height: 7px; background: repeating-linear-gradient(#bbb 0 1px, transparent 1px 3px); }
.trough { flex: 1; }
.preset { display: flex; align-items: center; height: 28px; }
.preset > span:first-child { width: 43px; }
.preset .combo { width: 199px; height: 23px; margin-right: 5px; }
.preset .combo .i16 { margin-right: 2px; }
.preset .combo .t { margin-left: auto; }
.preset > .i16 + .i16 { margin-left: 9px; }

.vtabs { margin-left: 2px; border-left: 1px solid #999; width: 29px; }
.vtab { width: 24px; border: 1px solid #999; border-left: 0; border-radius: 0 4px 4px 0; background: #c4c4c4; display: flex; flex-direction: column; align-items: center; padding: 8px 2px 0 0; margin-bottom: -1px; }
.vtab.on { background: #ededed; width: 25px; }
.vtab span { writing-mode: vertical-rl; margin: 8px 0 auto; white-space: nowrap; }
.vtab .x { margin-bottom: 10px; }
.v1 { height: 155px; } .v2 { height: 164px; } .v3 { height: 126px; } .v4 { height: 102px; }

.lower { height: 31px; border-top: 1px solid #bdbdbd; display: flex; align-items: flex-start; padding-top: 1px; background: linear-gradient(#999, #999) 0 1px / 100% 1px no-repeat; }
.expander { width: 17px; height: 29px; display: flex; flex-direction: column; align-items: center; padding-top: 2px; }
.expander .t { color: #553c86; }
.expander i { width: 7px; height: 13px; margin-top: 4px; background: repeating-linear-gradient(90deg, #aaa 0 1px, transparent 1px 2px); }
.btab { height: 24px; border: 1px solid #999; border-radius: 0 0 4px 4px; background: #c4c4c4; display: flex; align-items: center; width: 146px; padding-left: 7px; }
.btab.on { background: #ededed; width: 118px; height: 26px; border-top-color: #ededed; }
.btab span { width: 91px; margin-left: 9px; }
.btab.on span { width: 63px; }

.status { height: 33px; border-bottom: 1px solid #666; display: flex; align-items: center; padding: 2px 0 0 5px; white-space: nowrap; color: #000; }
.status > span:nth-of-type(1) { width: 1459px; margin-left: 5px; }
.status .grid { width: 63px; }
.status .xy { width: 181px; }
.xy b { color: #444; }
.status .nosel { border-left: 1px solid #ddd; margin-left: 13px; padding-left: 7px; width: 139px; }

.taskbar { height: 37px; background: linear-gradient(#eee, #d6d6d6); display: flex; padding: 3px 0 0 5px; font: 14px/20px "Noto Sans", sans-serif; color: #2e3436; }
.show { width: 30px; height: 27px; border: 1px solid #b5b5b5; border-radius: 3px; margin: 2px 5px 0 0; display: grid; place-items: center; }
.show svg { width: 18px; height: 18px; }
.tasks { width: 1630px; display: grid; grid-template-columns: repeat(9, minmax(0, 1fr)); gap: 5px; }
.task { height: 31px; border: 1.500px solid #b9b9b9; border-radius: 3px; background: #ededed; display: flex; align-items: center; padding-left: 7px; gap: 5px; white-space: nowrap; font-size: 13.500px; letter-spacing: -.65px; }
.task svg { width: 22px; height: 22px; }
.task.min { color: #8e9192; }
.task.active { background: #c9c9c9; }
.fade { opacity: .75; }
.pager { display: flex; margin: 3px 0 0 12px; gap: 3px; }
.pager i { width: 54px; height: 27px; border: 1px solid #c8c8c8; background: #dcdcdc; }
.pager .on { border: 2px solid #888; background: #f5f4f3; }
.pager i:last-child { border-radius: 0 4px 4px 0; }
```

FILE: app.js
```js
// Main toolbar: icon names per group; "v" is a menu caret, "-" a disabled one, "0" the level spinner.
const groups = [
  'folder save', 'pencil v delgray - burst', 'zoomfit v zoomgray v', 'zoomback zoomnext',
  'undo - redo -', '0 pick prefs down-l up-l top-l', 'chat v three v bricks v camera v',
  'plug chip tree-h burst-h battery v hier', 'drc v chk-a chk-b chk-c icv v'
];
const use = (cls, id) => `<svg class="${cls}"><use href="#${id}"/></svg>`;
const item = n => n === 'v' ? use('caret', 'tri')
  : n === '-' ? use('caret dim', 'tri')
  : n === '0' ? '<span class="spin">0<em>' + use('', 'up') + use('dim', 'tri') + '</em></span>'
  : use('ico', n);
document.getElementById('toolbar').innerHTML = groups
  .map((g, i) => `<div class="group g${i + 1}"><i class="grip"></i>${g.split(' ').map(item).join('')}</div>`).join('');

// Vertical tool palette.
const tools = ['info v', 'zoomin v', 'ruler v', 'move', 'resize', 'flip', 'side', 'stack', 'spread', 'pulse',
  'copy-x', 'copy-p', 'quad', 'fitv', 'checker', 'newlayer v', 'newfence v', 'redx v', '=',
  'lock -', 'unlock', 'blocks', 'pen-x', 'pen-c', '_', 'sq-x', 'sq -', '_', 'mirror -', 'align -', 'center -'];
document.getElementById('tools').innerHTML =
  '<div class="hgrip"></div><div class="tool sel"><span>' + use('main', 'arrow') + '</span></div>' +
  tools.map(s => {
    if (s === '=') return '<hr class="full"><div class="hgrip"></div>';
    if (s === '_') return '<hr class="short">';
    const [id, c] = s.split(' ');
    return `<div class="tool">${use('main', id)}${c ? use(c === '-' ? 't dim' : 't', 'tri') : ''}</div>`;
  }).join('') + '<div class="num">0</div>';

// Object tree: name, expander, visible, selectable, swatch colour, swatch style.
const rows = [
  ['Block', '', '', 0, '#808080'], ['Core Area', '', 1, 0, '#808080'], ['Port', '', 1, 1, '#00ffff'],
  ['Terminal', '+', 1, 0], ['Cell', '+', 1, 1], ['Fill Cell', '', 1, 0, '#808080'],
  ['Pin', '+', 0, 'half', '#00ffff'], ['Site Array', '', 0, 'off', '#ffa500'], ['Site Row', '+', 0, 'off', '#ffa500'],
  ['Bound', '+', 1, 1, '#ffff00', 'dash'], ['Placement Attraction', '', 0, 'half', '#ffff00', 'dash'],
  ['Voltage Area', '+', 0, 'half', '#800080', 'dash'], ['Route', '-', 1, 1],
  ['>Shape', '', 1, 1], ['>Via', '', 1, 1], ['>Net Type', '+', '', ''], ['>Shape Use', '+', '', ''],
  ['Topology', '+', 1, 1], ['Track', '+', 0, 'off'], ['Blockage', '+', 1, 1],
  ['PG Region', '', 1, 1, '#3cb371', 'dash'], ['RP Group', '', 0, 'off', '#00ffff', 'dash'],
  ['RP Blockage', '', 0, 'half', '#ffa500', 'hatch'], ['Guide', '+', 1, 1],
  ['Routing Corridor', '', 0, 'half', '#f08080'], ['Manufacturing Shape', '+', 0, 'half'],
  ['Bump Region', '-', 1, '', '#6495ed'], ['>Front Side', '', 1, 1], ['>Back Side', '', 1, 1], ['>Pseudo Bump', '+', 1, 1]
];
const box = v => v === '' ? '<span></span>' : `<i class="cb ${v === 1 ? 'on' : v === 0 ? '' : v}"></i>`;
const swatch = (c, kind) => {
  if (!c) return '<span></span>';
  let inner = `<rect x="1.500" y="1.500" width="20" height="13" fill="none" stroke="${c}"/>`;
  if (kind === 'dash') inner = `<path fill="${c}" d="M0 2h2v-2h1v2h-1v2h-2zM9 0h3v3h-3zM18 0h3v3h-3zM20 7h3v3h-3zM0 14h2v2h-2zM7 13h3v3h-3zM16 13h3v3h-3z"/>`;
  if (kind === 'hatch') inner += `<path d="M2 5l9 9M5 2l12 12M12 2l9 9" stroke="${c}"/>`;
  return `<svg width="23" height="16" shape-rendering="crispEdges"><rect width="23" height="16"/>${inner}</svg>`;
};
document.getElementById('tree').innerHTML = rows.map(([name, exp, vis, sel, col, kind]) => {
  const sub = name[0] === '>';
  const x = sub ? 31.5 : 10.5;
  const trunk = name === '>Shape Use' ? 9 : 19;
  let p = `<path d="M10.500 0v19M${x} 9.500h10M${x} 0v${trunk}" stroke="#a0a0a0"/>`;
  if (exp) p += `<path d="M${x - 5} 4.500h10v10h-10z" fill="#fff" stroke="#777"/><path d="M${x - 3} 9.500h6${exp === '+' ? `M${x} 6.500v6` : ''}" stroke="#555"/>`;
  return `<div class="row ${sub ? 'sub' : ''}"><span class="name"><svg fill="none" shape-rendering="crispEdges">${p}</svg>${name.replace('>', '')}</span>${box(vis)}${box(sel)}${swatch(col, kind)}</div>`;
}).join('');

// Chip layout, drawn in window coordinates.
const r = (x, y, w, h, f) => `<rect x="${x}" y="${y}" width="${w}" height="${h}" fill="${f}"/>`;
const frame = (x, y, w, h, c, dash = '') => `<rect x="${x + .5}" y="${y + .5}" width="${w - 1}" height="${h - 1}" fill="none" stroke="${c}" stroke-dasharray="${dash}"/>`;
let s = `<defs>
<pattern id="red" patternUnits="userSpaceOnUse" x="1" y="3" width="4" height="4"><rect width="1" height="1" fill="#d81c1c"/></pattern>
<pattern id="blue" patternUnits="userSpaceOnUse" x="1" y="3" width="4" height="4"><rect width="1" height="1" fill="#0000d0"/></pattern>
<pattern id="via" patternUnits="userSpaceOnUse" x="0" y="0" width="2" height="4"><rect width="1" height="1" fill="#2424ff"/><rect x="1" y="2" width="1" height="1" fill="#b02060"/></pattern>
</defs><g shape-rendering="crispEdges">`;
[[205, 210, 214], [378, 383, 387], [551, 556, 560], [725, 729, 733], [898, 902, 906]].forEach((ys, i) => {
  s += r(42, ys[0], 1539, ys[2] - ys[0], 'url(#blue)');
  ys.forEach(y => { s += r(42, y, 1539, 1, i === 3 ? '#0000dc' : '#0000ff'); });
});
[98, 332, 566, 800, 1035, 1269, 1503].forEach(x => { s += r(x, 139, 1, 811, '#00ffff'); });
s += '</g>';

const nets = ['16592000', '16564800', '16537600', '16510400', '16483200', '16456000'];
const netY = [147, 258, 431, 604, 777, 924];
const cellY = [192, 345, 518, 691, 864, 958];
const cols = ['7580800', '7617600', '7654400', '7691200', '7728000', '7764800'];
const t = (x, y, str, a = 'middle') => `<text x="${x}" y="${y}" text-anchor="${a}">${str}</text>`;
s += '<g fill="#00f0f0">';
nets.forEach((n, i) => {
  cols.forEach((c, j) => {
    const x = 215.3 + j * 234.15;
    s += t(x, netY[i], `...!x${c}y${n}`) + t(x, cellY[i], 'sky130_fd_sc_hd__f...');
  });
  s += t(1552.5, netY[i], '...' + n.slice(3)) + t(1552.5, cellY[i], 'sky13...');
  if (i === 0 || i === 5) {
    s += t(60.5, netY[i], '...000') + t(60.5, cellY[i], 'sky...');
  } else {
    const cy = netY[i] + 38.5;
    s += `<g transform="translate(46 ${cy}) rotate(-90)">${t(0, 0, '...000y' + n)}</g>`;
    s += `<g transform="translate(84 ${cy}) rotate(-90)">${t(0, 0, 'sky130_fd_sc...')}</g>`;
  }
});
s += '</g><g shape-rendering="crispEdges">' + r(944, 139, 251, 811, 'url(#red)');

[371, 717].forEach((y, k) => {
  s += r(949, y + 3, 241, 18, 'url(#via)') + r(949, y + 4, 241, 1, '#2424ff') + r(949, y + 19, 241, 1, '#1010ff');
  s += frame(946, y, 247, 25, '#00ff00', k ? '' : '3 1') + frame(944, y + 1, 251, 22, '#ff0000');
  s += r(945, y + 2, 249, 1, k ? '#ff2828' : '#ff00c8') + r(949, y + 3, 1, 20, '#00ff00') + r(1189, y + 3, 1, 20, '#00ff00');
  [948, 974, 999, 1024, 1050, 1075, 1101, 1126, 1152, 1177].forEach((x, j) => {
    if (j === 2 || j === 6) s += frame(x - 6, y + 7, 51, 11, '#1010ff');
    s += `<rect x="${x + .5}" y="${y + 6.5}" width="13" height="12" fill="#000" stroke="#fff"/><path d="M${x + 1} ${y + 7}l12 12M${x + 7} ${y + 7}l6 6M${x + 1} ${y + 13}l6 6" stroke="#fff" fill="none"/>`;
    s += r(x + 9, y + 8, 1, 9, '#1010ff');
  });
});
[942, 1069, 1196].forEach(x => { s += `<path d="M${x + .5} 139V950" stroke="#fff" stroke-dasharray="5 3"/>`; });
s += '</g><g fill="#ffdede" transform="translate(1074 545.500) rotate(-90)">' + t(0, 0, 'VSS') + '</g>';
document.getElementById('layout').innerHTML = s;
```
